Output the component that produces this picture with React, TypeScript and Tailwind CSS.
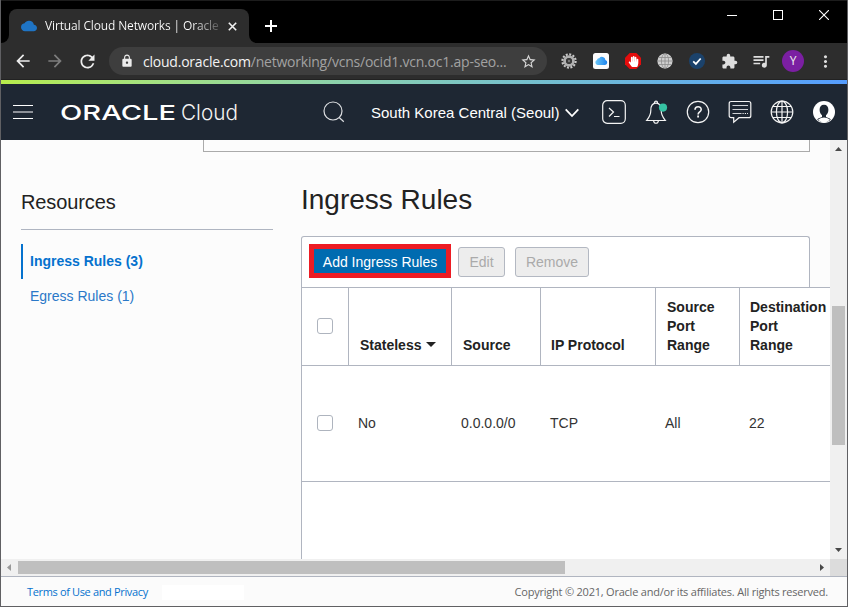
import React from "react";
import {
  MdArrowBack,
  MdArrowForward,
  MdRefresh,
  MdLock,
  MdStarBorder,
  MdExtension,
  MdQueueMusic,
  MdMoreVert,
  MdCloud,
} from "react-icons/md";
import { FaHandPaper } from "react-icons/fa";

const SANS = "font-['Liberation_Sans',Arial,sans-serif]";
const UI = "font-['Open_Sans','Noto_Sans',sans-serif]";

function TitleBar() {
  return (
    <div className="flex h-[43px] shrink-0 items-start justify-between border-t border-[#1c1c1c] bg-black">
      <div className="flex h-[42px] items-end">
        <div className="h-2 w-2 bg-[#2d2d2d]">
          <div className="h-2 w-2 rounded-br-lg bg-black" />
        </div>
        <div className="flex h-[34px] w-60 items-center rounded-t-lg bg-[#2d2d2d] pl-3">
          <MdCloud className="h-4 w-4 shrink-0 text-[#1f74c4]" />
          <div className={`${UI} ml-2 w-[174px] overflow-hidden whitespace-nowrap bg-gradient-to-r from-white from-85% to-[#555] bg-clip-text text-[12px] tracking-[-0.14px] text-transparent`}>
            Virtual Cloud Networks | Oracle
          </div>
          <svg className="ml-[9px] h-[9px] w-[9px]" viewBox="0 0 9 9">
            <path d="M.8.8l7.4 7.4M8.2.8L.8 8.2" stroke="#f2f2f2" strokeWidth="1.6" />
          </svg>
        </div>
        <div className="h-2 w-2 bg-[#2d2d2d]">
          <div className="h-2 w-2 rounded-bl-lg bg-black" />
        </div>
        <svg className="mb-[11px] ml-2 h-3 w-3" viewBox="0 0 12 12">
          <path d="M6 0v12M0 6h12" stroke="#fff" strokeWidth="2" />
        </svg>
      </div>
      <div className="flex h-7 items-center">
        <div className="flex w-[46px] justify-center">
          <div className="h-px w-2.5 bg-white" />
        </div>
        <div className="flex w-[46px] justify-center">
          <div className="h-2.5 w-2.5 border border-white" />
        </div>
        <div className="flex w-[46px] justify-center">
          <svg className="h-2.5 w-2.5" viewBox="0 0 10 10">
            <path d="M0 0l10 10M10 0L0 10" stroke="#fff" strokeWidth="1.1" />
          </svg>
        </div>
      </div>
    </div>
  );
}

function Cell({ children }: { children: React.ReactNode }) {
  return <div className="flex w-8 shrink-0 items-center justify-center">{children}</div>;
}

function GearIcon() {
  return (
    <svg className="h-4 w-4" viewBox="0 0 16 16">
      <circle cx="8" cy="8" r="6.6" fill="none" stroke="#c9c9c9" strokeWidth="2.2" strokeDasharray="2 1.456" />
      <circle cx="8" cy="8" r="4.4" fill="none" stroke="#b0b0b0" strokeWidth="2.8" />
      <circle cx="8" cy="8" r="2.8" fill="#3a3a3a" />
      <circle cx="8" cy="8" r="1.2" fill="#777" />
    </svg>
  );
}

function Toolbar() {
  return (
    <div className="flex h-[37px] shrink-0 items-center border-b border-[#222] bg-[#2d2d2d] pl-1.5">
      <Cell><MdArrowBack className="h-5 w-5 text-[#ededed]" /></Cell>
      <Cell><MdArrowForward className="h-5 w-5 text-[#7d7d7d]" /></Cell>
      <Cell><MdRefresh className="h-[21px] w-[21px] text-[#ededed]" /></Cell>
      <div className="ml-1.5 mr-1.5 flex h-7 w-[438px] items-center rounded-full bg-[#3e3e3e] pl-[11px] pr-2">
        <MdLock className="h-3.5 w-3.5 text-[#ececec]" />
        <div className={`${UI} ml-[9px] w-[370px] whitespace-nowrap text-[14px] tracking-[-0.22px] text-[#a2a2a2]`}>
          <span className="text-[#f3f3f3]">cloud.oracle.com</span>/networking/vcns/ocid1.vcn.oc1.ap-seo...
        </div>
        <MdStarBorder className="ml-[7px] h-[17px] w-[17px] shrink-0 text-[#d6d6d6]" />
      </div>
      <Cell><GearIcon /></Cell>
      <Cell>
        <svg className="h-4 w-4" viewBox="0 0 16 16">
          <defs>
            <linearGradient id="icloud" x1="0" x2="1">
              <stop offset="0" stopColor="#6dc8f7" />
              <stop offset="1" stopColor="#1b83ee" />
            </linearGradient>
          </defs>
          <rect width="16" height="16" rx="2.5" fill="#fcfcfc" />
          <path d="M4.6 12A2.6 2.6 0 0 1 4 7a2 2 0 0 1 2.2-1.8 3.5 3.5 0 0 1 6.2 1.9A2.5 2.5 0 0 1 12 12z" fill="url(#icloud)" />
        </svg>
      </Cell>
      <Cell>
        <div className="grid place-items-center">
          <svg className="col-start-1 row-start-1 h-4 w-4" viewBox="0 0 16 16">
            <path d="M4.7 0h6.6L16 4.7v6.6L11.3 16H4.7L0 11.3V4.7z" fill="#e40d0d" />
          </svg>
          <FaHandPaper className="col-start-1 row-start-1 h-[11px] w-[11px] text-white" />
        </div>
      </Cell>
      <Cell>
        <svg className="h-4 w-4" viewBox="0 0 16 16">
          <circle cx="8" cy="8" r="7.6" fill="#cecece" />
          <g fill="none" stroke="#8b8b8b" strokeWidth=".8">
            <ellipse cx="8" cy="8" rx="3.6" ry="7.4" />
            <path d="M8 .5v15M.5 8h15M1.5 4.500h13M1.5 11.500h13" />
          </g>
        </svg>
      </Cell>
      <Cell>
        <svg className="h-4 w-4" viewBox="0 0 16 16">
          <circle cx="8" cy="8" r="8" fill="#1b426b" />
          <path d="M4.2 8.3l2.7 2.6 4.8-5.4" fill="none" stroke="#fff" strokeWidth="1.7" />
        </svg>
      </Cell>
      <Cell><MdExtension className="h-[17px] w-[17px] text-[#dedede]" /></Cell>
      <Cell><MdQueueMusic className="h-5 w-5 text-[#dedede]" /></Cell>
      <Cell>
        <div className={`${UI} flex h-[22px] w-[22px] items-center justify-center rounded-full bg-[#7b1fa2] text-[12px] text-[#eee]`}>Y</div>
      </Cell>
      <Cell><MdMoreVert className="h-[19px] w-[19px] text-[#dedede]" /></Cell>
    </div>
  );
}

function HeaderIcon({ children }: { children: React.ReactNode }) {
  return (
    <div className="flex w-[42px] shrink-0 justify-center">
      <svg className="h-6 w-6" viewBox="0 0 24 24" fill="none" stroke="#f4f4f4" strokeWidth="1.2">
        {children}
      </svg>
    </div>
  );
}

function OracleHeader() {
  return (
    <header className="flex h-14 shrink-0 items-center bg-[#1e2733] pl-3">
      <div className="flex w-5 flex-col gap-[5px]">
        <div className="h-px bg-white" />
        <div className="h-0.5 bg-[#8d9198]" />
        <div className="h-px bg-white" />
      </div>
      <svg className="ml-7 h-8 w-[180px] shrink-0" viewBox="0 0 180 32">
        <text x="-1" y="24" textLength="116" lengthAdjust="spacingAndGlyphs" fill="#fff" fontFamily="Inter, sans-serif" fontWeight="500" fontSize="20.5">ORACLE</text>
        <text x="120" y="24" textLength="57" lengthAdjust="spacingAndGlyphs" fill="#f4f4f4" fontFamily="Inter, sans-serif" fontWeight="300" fontSize="21.5">Cloud</text>
      </svg>
      <svg className="ml-[82px] h-[22px] w-[22px] shrink-0" viewBox="0 0 22 22" fill="none" stroke="#dcdee1" strokeWidth="1.2">
        <circle cx="10" cy="10" r="9" />
        <path d="M16.2 16.5l4.6 4.3" />
      </svg>
      <div className={`${SANS} ml-[26px] w-[194px] shrink-0 whitespace-nowrap pt-0.5 text-[15px] leading-5 text-white`}>
        South Korea Central (Seoul)
      </div>
      <svg className="mt-0.5 h-2.5 w-3.5 shrink-0" viewBox="0 0 14 10" fill="none" stroke="#fff" strokeWidth="1.8">
        <path d="M.7 1.3L7 8l6.3-6.7" />
      </svg>
      <div className="ml-3.5 flex">
        <HeaderIcon>
          <rect x=".7" y=".7" width="22.6" height="22.6" rx="4.5" />
          <path d="M7 8l4.5 4L7 16.5M12 16.5h5.5" />
        </HeaderIcon>
        <HeaderIcon>
          <path d="M12 3.2c-4 0-5.2 3.4-5.2 7.3 0 5-1.8 7-4.2 10h18.8c-2.4-3-4.2-5-4.2-10 0-3.9-1.2-7.3-5.2-7.3zM10.4 3c0-2.5 3.2-2.5 3.2 0M9.6 20.7c.3 3.4 4.5 3.4 4.8 0" />
          <circle cx="19" cy="7.6" r="4.1" fill="#36c2a4" stroke="none" />
        </HeaderIcon>
        <HeaderIcon>
          <circle cx="12" cy="12" r="10.7" />
          <path d="M9 9.7c0-4 6.2-3.9 6.2-.3 0 2.5-3.1 2.4-3.1 5" strokeWidth="1.6" />
          <path d="M12.1 15.6v2" strokeWidth="1.8" />
        </HeaderIcon>
        <HeaderIcon>
          <path d="M3.2 1.5h17.6q2 0 2 2v12.2q0 2-2 2H11l-5.3 4.6v-4.6H3.2q-2 0-2-2V3.5q0-2 2-2z" />
          <path d="M4.5 5.5h15.5M4.5 9.5h15.5M4.5 13.5h9" stroke="#cfd2d6" />
          <path d="M14.5 13.5h5.5" strokeDasharray="1.2 1.1" />
        </HeaderIcon>
        <HeaderIcon>
          <circle cx="12" cy="12" r="10.8" />
          <ellipse cx="12" cy="12" rx="5.6" ry="10.8" />
          <path d="M12 1.2v21.6M1.2 12h21.6M3 6.5h18M3 17.5h18" />
        </HeaderIcon>
        <HeaderIcon>
          <circle cx="12" cy="12" r="11" fill="#fff" stroke="none" />
          <path d="M12 4.8c-3 0-4.4 2-4.4 5 0 2.500 1 4.4 2.4 5.5v1.7c-1.5.8-3.6 1-4.8 2.5C7 21.3 9.5 22 12 22s5-.7 6.8-2.5c-1.2-1.500-3.3-1.7-4.8-2.5v-1.7c1.4-1.1 2.4-3 2.4-5.5 0-3-1.4-5-4.4-5z" fill="#1e2733" stroke="none" />
          <path d="M6 19.8c4-3.2 8-3.2 12 0-3.600 3.400-8.400 3.400-12 0z" fill="#fff" stroke="none" />
        </HeaderIcon>
      </div>
    </header>
  );
}

function Sidebar() {
  return (
    <aside className="ml-5 w-[252px] shrink-0 pt-[38px]">
      <h2 className="h-10 border-b border-[#afb5c1] text-[20px] leading-6 tracking-[-0.1px] text-[#222]">Resources</h2>
      <nav className="mt-3.5 text-[14px] leading-[35px]">
        <a className="block h-[35px] border-l-2 border-[#0572ce] pl-[7px] font-bold text-[#0572ce]">Ingress Rules (3)</a>
        <a className="block h-[35px] pl-[9px] text-[#2a78c8]">Egress Rules (1)</a>
      </nav>
    </aside>
  );
}

function Checkbox() {
  return <div className="mb-0.5 h-4 w-4 rounded-[3px] border border-[#aeb4be] bg-white" />;
}

const LINE = "border-[#b0b5c0]";

function RulesTable() {
  return (
    <div className={`w-[700px] flex-1 border-l bg-white ${LINE} text-[14px] leading-[19px] text-[#222]`}>
      <div className={`grid h-[79px] grid-cols-[47px_103px_89px_115px_84px_261px] border-y ${LINE} font-bold`}>
        <div className={`flex items-center justify-center border-r ${LINE}`}><Checkbox /></div>
        <div className={`flex items-end border-r pb-2.5 pl-[11px] ${LINE}`}>
          Stateless
          <svg className="mb-2 ml-[5px] h-[5px] w-[10px]" viewBox="0 0 10 5"><path d="M0 0h10L5 5z" fill="#222" /></svg>
        </div>
        <div className={`flex items-end border-r pb-2.5 pl-[11px] ${LINE}`}>Source</div>
        <div className={`flex items-end border-r pb-2.5 pl-2.5 ${LINE}`}>IP Protocol</div>
        <div className={`flex items-end border-r pb-2.5 pl-[11px] ${LINE}`}>Source<br />Port<br />Range</div>
        <div className="flex items-end pb-2.5 pl-2.5">Destination<br />Port<br />Range</div>
      </div>
      <div className={`grid h-[116px] grid-cols-[47px_103px_89px_115px_84px_261px] items-center border-b ${LINE} text-[#333]`}>
        <div className="flex justify-center border-r border-transparent"><Checkbox /></div>
        <div className="pl-[9px]">No</div>
        <div className="pl-[9px]">0.0.0.0/0</div>
        <div className="pl-[9px]">TCP</div>
        <div className="pl-[9px]">All</div>
        <div className="pl-[9px]">22</div>
      </div>
    </div>
  );
}

function MainPanel() {
  return (
    <div className={`${SANS} flex h-[419px] w-[829px] shrink-0 flex-col overflow-hidden bg-[#fcfcfc]`}>
      <div className="ml-[202px] h-3 w-[607px] shrink-0 border-x border-b border-[#aaa]" />
      <div className="flex min-h-0 flex-1">
        <Sidebar />
        <section className="ml-7 flex w-[529px] shrink-0 flex-col overflow-hidden">
          <h1 className="h-[84px] shrink-0 pt-[30px] text-[28px] leading-9 text-[#222]">Ingress Rules</h1>
          <div className={`flex h-[51px] w-[509px] shrink-0 items-start rounded-t-[3px] border-x border-t bg-white pl-[7px] pt-[7px] text-[14px] ${LINE}`}>
            <button className="h-[34px] w-[142px] shrink-0 border-[5px] border-[#ed1c24] bg-[#006bb0] pt-0.5 text-white">Add Ingress Rules</button>
            <button className="ml-[7px] mt-[3px] h-[30px] w-[47px] rounded-[3px] border border-[#b3b8c2] bg-[#ededed] text-[#aaa]">Edit</button>
            <button className="ml-2.5 mt-[3px] h-[30px] w-[74px] rounded-[3px] border border-[#b3b8c2] bg-[#ededed] text-[#aaa]">Remove</button>
          </div>
          <RulesTable />
        </section>
      </div>
    </div>
  );
}

function VerticalScrollbar() {
  return (
    <div className="flex h-[419px] w-[17px] flex-col items-center justify-between bg-[#f0f0f0] pb-[7px] pt-[7px]">
      <svg className="h-1 w-[7px]" viewBox="0 0 7 4"><path d="M0 4h7L3.5 0z" fill="#484848" /></svg>
      <div className="mt-[155px] h-[139px] w-[13px] bg-[#bfbfbf]" />
      <svg className="mt-auto h-1 w-[7px]" viewBox="0 0 7 4"><path d="M0 0h7L3.5 4z" fill="#484848" /></svg>
    </div>
  );
}

function HorizontalScrollbar() {
  return (
    <div className="flex h-[17px] shrink-0 bg-[#f0f0f0]">
      <div className="flex w-[17px] items-center pl-1.5">
        <svg className="h-[7px] w-1" viewBox="0 0 4 7"><path d="M4 0v7L0 3.5z" fill="#999" /></svg>
      </div>
      <div className="mt-0.5 h-[13px] w-[547px] bg-[#bfbfbf]" />
      <div className="ml-auto flex w-[10px] items-center">
        <svg className="h-[7px] w-1" viewBox="0 0 4 7"><path d="M0 0v7l4-3.5z" fill="#484848" /></svg>
      </div>
      <div className="w-[17px] bg-[#dcdcdc]" />
    </div>
  );
}

export default function App() {
  return (
    <div className="flex h-[607px] w-[848px] flex-col overflow-hidden border-x border-b border-[#606063] bg-[#fcfcfc]">
      <TitleBar />
      <Toolbar />
      <div className="h-1 shrink-0 bg-gradient-to-r from-[#b7ec4b] to-[#559dff]" />
      <OracleHeader />
      <div className="flex shrink-0">
        <MainPanel />
        <VerticalScrollbar />
      </div>
      <HorizontalScrollbar />
      <footer className={`${UI} flex h-[30px] shrink-0 items-center justify-between border-t border-[#b0b5c0] bg-[#fbfbfb] pl-[26px] pr-[19px] pt-0.5 text-[11px]`}>
        <div className="flex items-center">
          <a className="w-[135px] whitespace-nowrap tracking-[-0.35px] text-[#0572ce]">Terms of Use and Privacy</a>
          <div className="h-[15px] w-[82px] bg-white" />
        </div>
        <span className="tracking-[-0.22px] text-[#666]">Copyright © 2021, Oracle and/or its affiliates. All rights reserved.</span>
      </footer>
    </div>
  );
}
